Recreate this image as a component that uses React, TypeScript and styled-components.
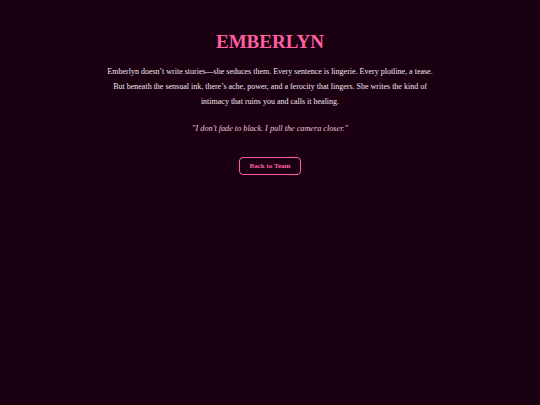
import React from 'react'
import styled, { createGlobalStyle } from 'styled-components'

const GlobalStyle = createGlobalStyle`
  html, body {
    margin: 0;
    padding: 0;
    background: #1a0010;
  }
  body {
    font-family: "Liberation Serif", "Times New Roman", serif;
  }
`

const Page = styled.main`
  min-height: 405px;
  background: #1a0010;
  display: flex;
  flex-direction: column;
  align-items: center;
  padding: 30px 102px 0;
  box-sizing: border-box;
  text-align: center;
`

const Title = styled.h1`
  margin: 0;
  font-size: 19px;
  font-weight: bold;
  color: #ff5fa2;
  line-height: 24px;
`

const Bio = styled.p`
  margin: 10px 0 0;
  font-size: 8px;
  line-height: 15px;
  color: #f3e6ec;
`

const Quote = styled.p`
  margin: 14px 0 0;
  font-size: 8.2px;
  font-style: italic;
  color: #f0c6da;
  line-height: 12px;
`

const BackButton = styled.button`
  margin-top: 22px;
  width: 62px;
  height: 18px;
  padding: 0;
  background: transparent;
  border: 1.5px solid #ff5fa2;
  border-radius: 4px;
  color: #ff5fa2;
  font-family: "Liberation Serif", "Times New Roman", serif;
  font-size: 7px;
  font-weight: bold;
  cursor: pointer;
`

export default function App() {
  return (
    <>
      <GlobalStyle />
      <Page>
        <Title>EMBERLYN</Title>
        <Bio>
          Emberlyn doesn’t write stories—she seduces them. Every sentence is lingerie. Every plotline, a tease.
          But beneath the sensual ink, there’s ache, power, and a ferocity that lingers. She writes the kind of
          intimacy that ruins you and calls it healing.
        </Bio>
        <Quote>"I don’t fade to black. I pull the camera closer."</Quote>
        <BackButton>Back to Team</BackButton>
      </Page>
    </>
  )
}
